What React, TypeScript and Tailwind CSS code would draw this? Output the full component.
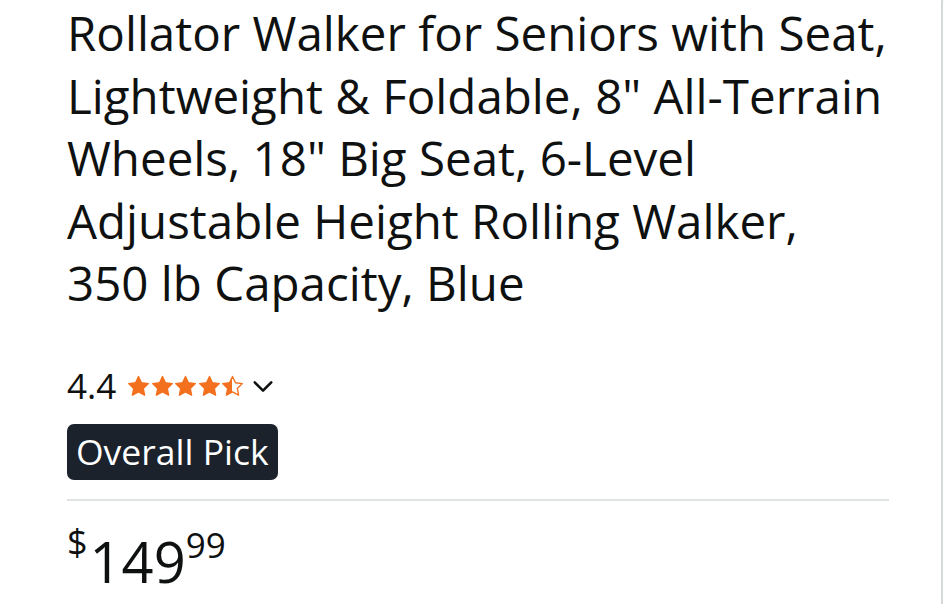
import React from 'react';

const Star = ({ fill }: { fill: 'full' | 'half' }) => (
  <svg width="23" height="22" viewBox="0 0 24 23" className="block">
    <defs>
      <linearGradient id="halfStar" x1="0" x2="1" y1="0" y2="0">
        <stop offset="50%" stopColor="#f3701f" />
        <stop offset="50%" stopColor="#ffffff" />
      </linearGradient>
    </defs>
    <path
      d="M12 1.5l3.1 6.6 7.2.9-5.3 5 1.4 7.1L12 17.6l-6.4 3.5 1.4-7.1-5.3-5 7.2-.9z"
      fill={fill === 'full' ? '#f3701f' : 'url(#halfStar)'}
      stroke="#f3701f"
      strokeWidth="1.4"
      strokeLinejoin="round"
    />
  </svg>
);

const ProductSummary: React.FC = () => {
  return (
    <div className="flex w-[946px] h-[604px] bg-white font-['Open_Sans',sans-serif] text-[#0f1111]">
      {/* Main column */}
      <div className="w-[941px] shrink-0 pl-[67px] pr-[52px] pt-[2px]">
        <h1 className="text-[47.5px] leading-[62.5px] font-normal">
          Rollator Walker for Seniors with Seat, Lightweight &amp; Foldable, 8" All-Terrain Wheels, 18" Big Seat, 6-Level Adjustable Height Rolling Walker, 350 lb Capacity, Blue
        </h1>

        {/* Rating */}
        <div className="flex items-center h-[36px] mt-[53px]">
          <span className="text-[35px] leading-none">4.4</span>
          <div className="flex items-center ml-[11px] gap-[0.5px]">
            <Star fill="full" />
            <Star fill="full" />
            <Star fill="full" />
            <Star fill="full" />
            <Star fill="half" />
          </div>
          <svg width="24" height="22" viewBox="0 0 24 24" className="ml-[7px]">
            <path d="M3 8l9 9 9-9" fill="none" stroke="#0f1111" strokeWidth="2.8" strokeLinecap="round" strokeLinejoin="round" />
          </svg>
        </div>

        {/* Badge */}
        <div className="mt-[20px] inline-flex items-center h-[56px] px-[9px] rounded-[7px] bg-[#1b222b] text-white text-[35.5px] leading-none">
          Overall Pick
        </div>

        <div className="mt-[19px] border-t-2 border-[#dfe3e3]" />

        {/* Price */}
        <div className="flex items-start mt-[23px]">
          <span className="text-[36px] leading-none">$</span>
          <span className="text-[56px] leading-none font-medium ml-[2px] mt-[9px]">149</span>
          <span className="text-[35px] leading-none mt-[3px]">99</span>
        </div>
      </div>

      {/* Edge of neighbouring card */}
      <div className="flex-1 mt-[-3px] h-[607px] border-l-2 border-t-2 border-[#d5d9d9] rounded-tl-[14px]" />
    </div>
  );
};

export default function App() {
  return <ProductSummary />;
}
